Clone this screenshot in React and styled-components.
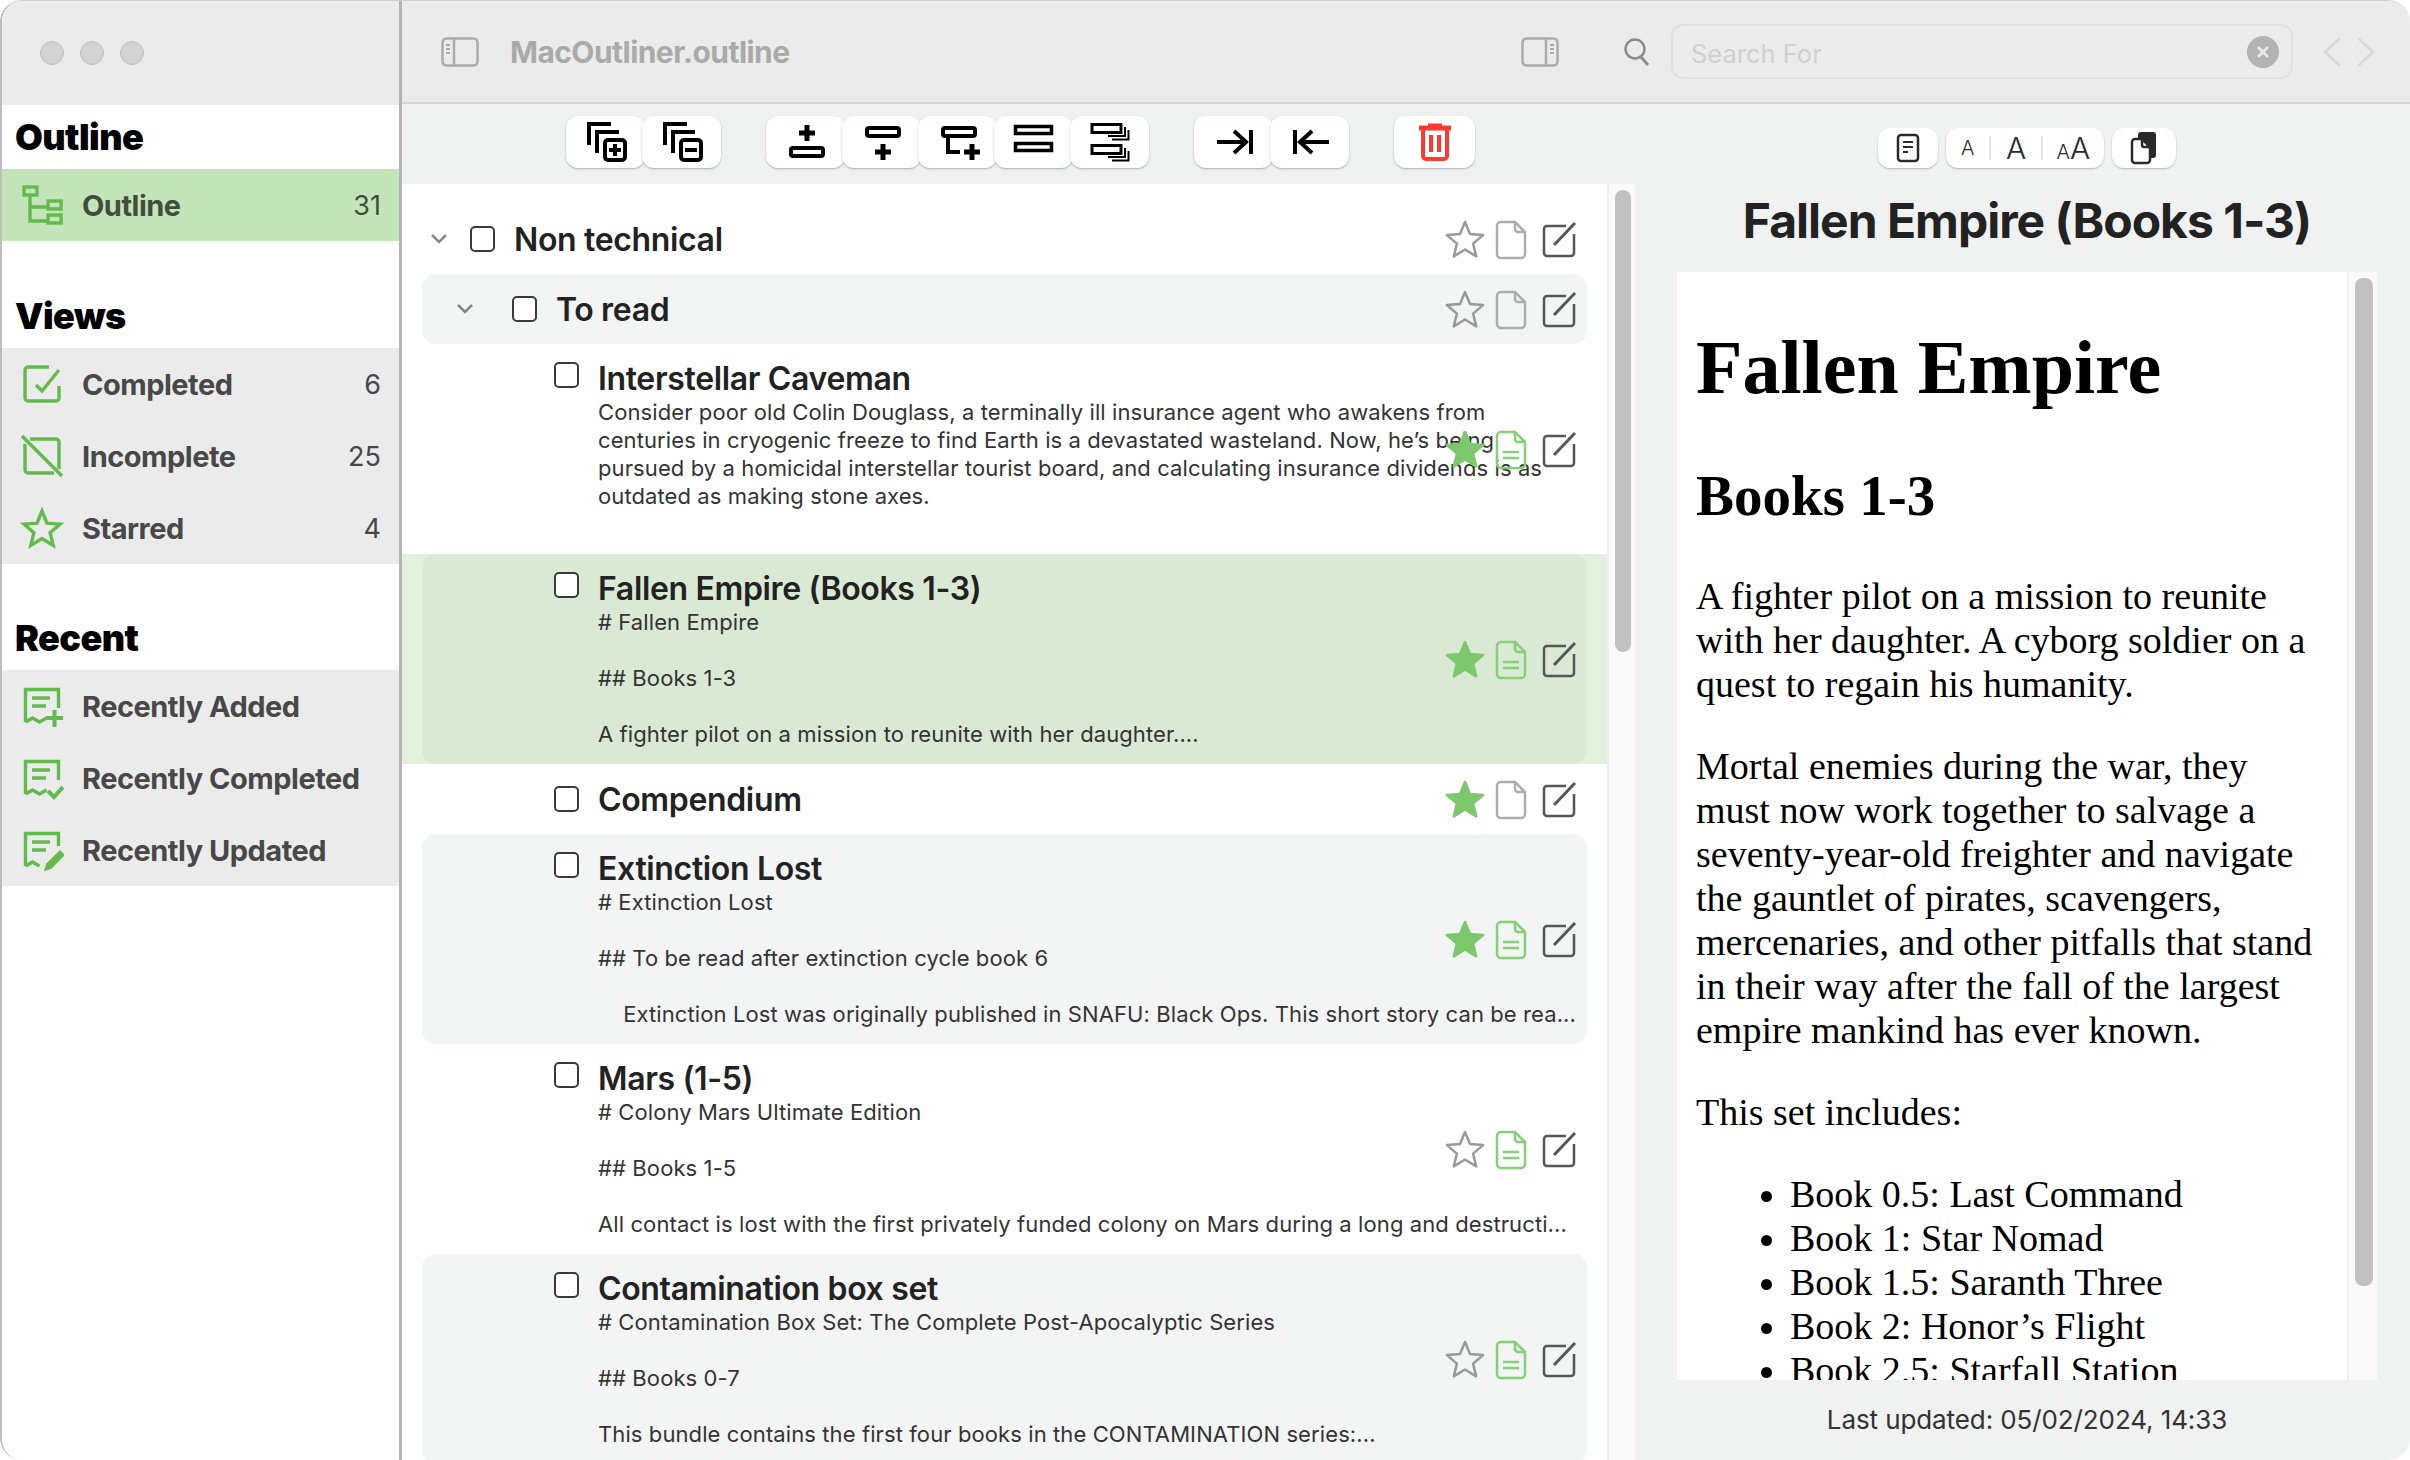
import React from 'react';
import styled, { createGlobalStyle } from 'styled-components';

const GREEN = '#62bb4c';
const UI_FONT = '"Inter", "Liberation Sans", sans-serif';

const GlobalStyle = createGlobalStyle`
    html, body {
        margin: 0;
        padding: 0;
        background: #fff;
        font-family: ${UI_FONT};
    }
`;

const Window = styled.div`
    display: flex;
    width: 2410px;
    height: 1460px;
    overflow: hidden;
    box-sizing: border-box;
    border-radius: 22px;
    border-left: 2px solid #bdbdbd;
    border-top: 1px solid #cfcfcf;
    background: #fff;
`;

/* sidebar */
const Sidebar = styled.aside`
    display: flex;
    flex-direction: column;
    flex: none;
    width: 400px;
    box-sizing: border-box;
    border-right: 3px solid #b4b4b4;
    background: #fff;
`;
const SidebarTop = styled.div`
    display: flex;
    align-items: center;
    gap: 16px;
    flex: none;
    height: 104px;
    padding: 0 0 0 38px;
    box-sizing: border-box;
    background: #ebebeb;
`;
const Light = styled.span`
    width: 24px;
    height: 24px;
    box-sizing: border-box;
    border-radius: 50%;
    background: #d2d2d2;
    border: 1px solid #bfbfbf;
`;
const SectionHead = styled.div`
    height: 64px;
    margin-top: ${({ $gap }) => $gap}px;
    padding-left: 13px;
    line-height: 64px;
    font-size: 36px;
    font-weight: 900;
    letter-spacing: -0.6px;
    color: #000;
`;
const NavRow = styled.div`
    display: flex;
    align-items: center;
    height: 72px;
    padding: 0 18px 0 18px;
    background: ${({ $active }) => ($active ? '#c3e4b9' : '#ebebeb')};
    color: ${({ $active }) => ($active ? '#3f4f3b' : '#484848')};
`;
const NavIcon = styled.svg`
    flex: none;
    width: 44px;
    height: 44px;
    margin-right: 18px;
`;
const NavLabel = styled.span`
    flex: 1;
    font-size: 29px;
    font-weight: 700;
    letter-spacing: -0.5px;
`;
const NavCount = styled.span`
    font-size: 27px;
    font-weight: 400;
`;

/* main area */
const Main = styled.div`
    display: flex;
    flex-direction: column;
    flex: 1;
    min-width: 0;
`;
const TitleBar = styled.header`
    display: flex;
    align-items: center;
    flex: none;
    height: 103px;
    padding: 0 0 0 39px;
    box-sizing: border-box;
    border-bottom: 2px solid #d4d4d4;
    background: #ebebeb;
`;
const DocName = styled.div`
    flex: none;
    width: 1011px;
    margin-left: 31px;
    font-size: 30px;
    font-weight: 700;
    letter-spacing: -0.55px;
    color: #aaa;
`;
const BarIcon = styled.svg`
    flex: none;
    margin-left: ${({ $gap = 0 }) => $gap}px;
`;
const SearchField = styled.div`
    display: flex;
    align-items: center;
    justify-content: space-between;
    width: 622px;
    height: 55px;
    margin: 0 29px 0 20px;
    padding: 0 12px 0 18px;
    box-sizing: border-box;
    border: 2px solid #e0e0e0;
    border-radius: 12px;
    font-size: 25.5px;
    color: #d0d0d0;
`;
const Placeholder = styled.span`
    padding-top: 4px;
`;
const ClearButton = styled.span`
    display: flex;
    align-items: center;
    justify-content: center;
    width: 32px;
    height: 32px;
    border-radius: 50%;
    background: #b3b3b3;
`;
const Body = styled.div`
    display: flex;
    flex: 1;
    min-height: 0;
`;
const OutlinePane = styled.section`
    display: flex;
    flex-direction: column;
    flex: none;
    width: 1233px;
`;
const ToolBar = styled.div`
    display: flex;
    align-items: center;
    flex: none;
    height: 80px;
    padding: 0 0 4px 164px;
    box-sizing: border-box;
    background: #eff1f1;
`;
const ToolGroup = styled.div`
    display: flex;
    margin-right: ${({ $gap }) => $gap}px;
`;
const ToolButton = styled.div`
    display: flex;
    align-items: center;
    justify-content: center;
    width: ${({ $width = 79 }) => $width}px;
    height: 52px;
    margin-right: -3px;
    border-radius: 12px;
    background: #fff;
    box-shadow: 0 1px 2px rgba(0, 0, 0, 0.28);
`;
const ListArea = styled.div`
    display: flex;
    flex: 1;
    min-height: 0;
`;
const OutlineList = styled.div`
    flex: 1;
    min-width: 0;
    padding-top: 20px;
    overflow: hidden;
    background: #fff;
`;
const ScrollTrack = styled.div`
    flex: none;
    width: ${({ $width }) => $width}px;
    box-sizing: border-box;
    padding: ${({ $top }) => $top}px 4px 0 ${({ $left }) => $left}px;
    border-left: 2px solid #eeeeee;
    background: #fafafa;
`;
const ScrollThumb = styled.div`
    height: ${({ $height }) => $height}px;
    border-radius: 8px;
    background: #c1c1c1;
`;

/* outline rows */
const RowBand = styled.div`
    padding: 0 20px;
    background: ${({ $selected }) => ($selected ? '#e2f0dc' : 'transparent')};
`;
const RowBox = styled.div`
    position: relative;
    display: flex;
    align-items: ${({ $note }) => ($note ? 'flex-start' : 'center')};
    height: ${({ $note }) => ($note ? 210 : 70)}px;
    box-sizing: border-box;
    border-radius: 14px;
    background: ${({ $selected, $alt }) => ($selected ? '#d9e9d4' : $alt ? '#f3f5f5' : 'transparent')};
`;
const Disclosure = styled.div`
    display: flex;
    align-items: center;
    flex: none;
    width: ${({ $level }) => 48 + 42 * $level}px;
    padding-left: ${({ $level }) => 7 + 26 * $level}px;
    box-sizing: border-box;
`;
const CheckBox = styled.span`
    flex: none;
    width: 25px;
    height: 26px;
    margin-top: ${({ $note }) => ($note ? '18px' : 0)};
    box-sizing: border-box;
    border: 2.5px solid #3a3a3a;
    border-radius: 5px;
    background: #fff;
`;
const RowText = styled.div`
    flex: 1;
    min-width: 0;
    margin-left: 19px;
    padding-top: ${({ $note }) => ($note ? '15px' : '1px')};
`;
const RowTitle = styled.div`
    height: 40px;
    line-height: 40px;
    font-size: 32px;
    font-weight: 600;
    letter-spacing: -0.35px;
    color: #222;
`;
const RowNote = styled.div`
    white-space: pre;
    line-height: 28px;
    font-size: 22px;
    letter-spacing: 0.1px;
    color: #333;
    margin-top: -1px;
`;
const RowActions = styled.div`
    position: absolute;
    top: calc(50% + 1px);
    right: 9px;
    display: flex;
    align-items: center;
    transform: translateY(-50%);
`;
const ActionIcon = styled.svg`
    flex: none;
    margin-left: ${({ $gap }) => $gap}px;
`;

/* preview pane */
const PreviewPane = styled.section`
    display: flex;
    flex-direction: column;
    flex: 1;
    min-width: 0;
    padding: 24px 33px 0 42px;
    background: #f0f2f2;
`;
const PreviewTools = styled.div`
    display: flex;
    justify-content: center;
    gap: 8px;
    flex: none;
    height: 40px;
`;
const PreviewTool = styled.div`
    display: flex;
    align-items: center;
    justify-content: center;
    width: ${({ $width }) => $width}px;
    height: 40px;
    border-radius: 12px;
    background: #fff;
    box-shadow: 0 1px 2px rgba(0, 0, 0, 0.25);
    color: #2a2a2a;
`;
const SizeCell = styled.div`
    display: flex;
    justify-content: center;
    align-items: baseline;
    width: ${({ $width }) => $width}px;
    height: 24px;
    line-height: 24px;
    border-left: ${({ $divider }) => ($divider ? '2px solid #e3e3e3' : 'none')};
    font-weight: 300;
`;
const SizeLetter = styled.span`
    font-size: ${({ $size }) => $size}px;
`;
const PreviewTitle = styled.h2`
    flex: none;
    height: 104px;
    margin: 0;
    line-height: 106px;
    text-align: center;
    font-size: 48px;
    font-weight: 700;
    letter-spacing: -1px;
    color: #222;
`;
const PreviewBox = styled.div`
    display: flex;
    flex: none;
    height: 1108px;
    overflow: hidden;
    background: #fff;
`;
const Article = styled.article`
    flex: 1;
    min-width: 0;
    padding: 0 17px 0 19px;
    font-family: "Liberation Serif", serif;
    font-size: 38px;
    line-height: 44px;
    color: #000;

    h1 {
        margin: 52px 0 0;
        font-size: 76px;
        line-height: 86px;
    }
    h2 {
        margin: 53px 0 0;
        font-size: 57px;
        line-height: 66px;
    }
    p {
        margin: 38px 0 0;
    }
    h2 + p {
        margin-top: 45px;
    }
    ul {
        margin: 38px 0 0;
        padding: 0 0 0 94px;
    }
`;
const Footer = styled.div`
    flex: none;
    height: 80px;
    line-height: 80px;
    text-align: center;
    font-size: 26px;
    letter-spacing: -0.1px;
    color: #333;
`;

/* icons */
const starPoints = (cx, cy, R, r) =>
    Array.from({ length: 10 }, (_, i) => {
        const a = (Math.PI / 5) * i - Math.PI / 2;
        const d = i % 2 ? r : R;
        return `${(cx + d * Math.cos(a)).toFixed(1)},${(cy + d * Math.sin(a)).toFixed(1)}`;
    }).join(' ');

const RECEIPT = 'M5.5 38V5.5H38.5V24M5.5 38l7-4 7 4 7-4M12 14H30M12 22H26';

const NavGlyph = ({ name }) => {
    const stroke = { fill: 'none', stroke: GREEN, strokeWidth: 3.4 };
    return (
        <NavIcon viewBox="0 0 44 44" {...stroke}>
            {name === 'tree' && (
                <>
                    <rect x="4" y="4" width="13" height="8" />
                    <rect x="28" y="18" width="13" height="8" />
                    <rect x="28" y="32" width="13" height="8" />
                    <path d="M10 12V38H28M10 24H28" />
                </>
            )}
            {name === 'check' && (
                <>
                    <path d="M29 5H8a3 3 0 0 0-3 3v28a3 3 0 0 0 3 3h28a3 3 0 0 0 3-3V24" />
                    <path d="M16 23l6 6L39 8" />
                </>
            )}
            {name === 'none' && (
                <>
                    <path d="M10 5H36a3 3 0 0 1 3 3V35M34 39H8a3 3 0 0 1-3-3V10" />
                    <path d="M2 2L42 42" />
                </>
            )}
            {name === 'star' && <polygon points={starPoints(22, 24, 19, 8.5)} />}
            {name === 'added' && (
                <>
                    <path d={RECEIPT} />
                    <path d="M26 34H43M34.5 26V43" strokeWidth="4" />
                </>
            )}
            {name === 'done' && (
                <>
                    <path d={RECEIPT} />
                    <path d="M28 35l6 6 9-10" strokeWidth="4" />
                </>
            )}
            {name === 'edited' && (
                <>
                    <path d="M5.5 38V5.5H38.5V18M5.5 38l7-4 7 4M12 14H30M12 22H26" />
                    <path d="M25 42l2-6L40 23l4 4L31 40z" fill={GREEN} strokeWidth="1.5" />
                </>
            )}
        </NavIcon>
    );
};

const GLYPH_SHIFT = { docPlus: -3, docMinus: -3, addAbove: -2, addBelow: -2, addChild: -2 };

const ToolGlyph = ({ name }) => {
    const common = { fill: 'none', stroke: '#000', strokeWidth: 4 };
    const doc = <rect x="18" y="18" width="20" height="20" rx="3" />;
    return (
        <svg width="44" height="40" viewBox={`${GLYPH_SHIFT[name] || 0} 0 44 40`} {...common}>
            {name === 'docPlus' && (
                <>
                    <path d="M2 23V2H24M10 31V10H32" />
                    {doc}
                    <path d="M22 28H34M28 22V34" />
                </>
            )}
            {name === 'docMinus' && (
                <>
                    <path d="M2 23V2H24M10 31V10H32" />
                    {doc}
                    <path d="M22 28H34" />
                </>
            )}
            {name === 'addAbove' && (
                <>
                    <path d="M13 11H29M21 3V19" strokeWidth="5" />
                    <rect x="5" y="26" width="32" height="8" rx="2" />
                </>
            )}
            {name === 'addBelow' && (
                <>
                    <rect x="5" y="6" width="32" height="8" rx="2" />
                    <path d="M13 30H29M21 22V38" strokeWidth="5" />
                </>
            )}
            {name === 'addChild' && (
                <>
                    <rect x="5" y="6" width="32" height="8" rx="2" />
                    <path d="M10 14V30H22" />
                    <path d="M26 30H42M34 22V38" strokeWidth="5" />
                </>
            )}
            {name === 'rows' && (
                <g strokeWidth="3.5">
                    <rect x="3.5" y="4.5" width="36" height="7" />
                    <rect x="3.5" y="21.5" width="36" height="7" />
                </g>
            )}
            {name === 'rowsStack' && (
                <g strokeWidth="3">
                    <rect x="4" y="2.5" width="29" height="8" />
                    <path d="M20 14H37V5M24 17.5H40.5V8" strokeWidth="2" />
                    <rect x="4" y="23.5" width="29" height="8" />
                    <path d="M20 35H37V26M24 38.5H40.5V29" strokeWidth="2" />
                </g>
            )}
            {name === 'indent' && (
                <path d="M5 20H35M22 9L34 20L22 31M39 8V32" />
            )}
            {name === 'outdent' && (
                <path d="M41 20H11M24 9L12 20L24 31M7 8V32" />
            )}
        </svg>
    );
};

const TrashIcon = () => (
    <svg width="34" height="38" viewBox="0 0 34 38" fill="none" stroke="#fc3a30" strokeWidth="4">
        <path d="M1 5H33M10 3H24" strokeWidth="5" />
        <path d="M5 6V33a3 3 0 0 0 3 3H26a3 3 0 0 0 3-3V6" />
        <path d="M13 12V29M21 12V29" />
    </svg>
);

const StarIcon = ({ on }) => (
    <svg width="42" height="40" viewBox="0 0 42 40">
        <polygon
            points={starPoints(21, 21, 19, 8.5)}
            fill={on ? '#7dc76c' : 'none'}
            stroke={on ? '#7dc76c' : '#999'}
            strokeWidth="2.5"
            strokeLinejoin="round"
        />
    </svg>
);

const DocIcon = ({ on }) => (
    <ActionIcon $gap={9} width="32" height="40" viewBox="0 0 32 40" fill="none" stroke={on ? '#85d077' : '#adadad'} strokeWidth="2.5">
        <path d="M20 2H6a4 4 0 0 0-4 4V34a4 4 0 0 0 4 4H26a4 4 0 0 0 4-4V12zM20 2V9a3 3 0 0 0 3 3H30" />
        {on && <path d="M8 22H24M8 28H24" />}
    </ActionIcon>
);

const EditIcon = () => (
    <ActionIcon $gap={15} width="36" height="38" viewBox="0 0 36 38" fill="none" stroke="#565656" strokeWidth="2.5">
        <path d="M24 5H5a3 3 0 0 0-3 3V32a3 3 0 0 0 3 3H29a3 3 0 0 0 3-3V13" />
        <path d="M12 24L33 2" strokeWidth="3" />
    </ActionIcon>
);

const Chevron = ({ color = '#888' }) => (
    <svg width="20" height="12" viewBox="0 0 20 12" fill="none" stroke={color} strokeWidth="2.5">
        <path d="M3 2l7 7 7-7" />
    </svg>
);

const PanelIcon = ({ right }) => (
    <BarIcon width="38" height="30" viewBox="0 0 38 30" fill="none" stroke="#ababab" strokeWidth="2.5">
        <rect x="1.5" y="1.5" width="35" height="27" rx="4" />
        <path d={right ? 'M25 2V28' : 'M13 2V28'} />
        <path d={right ? 'M29 8H33M29 12H33M29 16H33' : 'M5 8H9M5 12H9M5 16H9'} strokeWidth="2" />
    </BarIcon>
);

const NAV = {
    views: [
        { icon: 'check', label: 'Completed', count: 6 },
        { icon: 'none', label: 'Incomplete', count: 25 },
        { icon: 'star', label: 'Starred', count: 4 },
    ],
    recent: [
        { icon: 'added', label: 'Recently Added' },
        { icon: 'done', label: 'Recently Completed' },
        { icon: 'edited', label: 'Recently Updated' },
    ],
};

const ROWS = [
    { level: 0, title: 'Non technical', open: true },
    { level: 1, title: 'To read', open: true, alt: true },
    {
        level: 2,
        title: 'Interstellar Caveman',
        docOn: true,
        starred: true,
        note: 'Consider poor old Colin Douglass, a terminally ill insurance agent who awakens from\ncenturies in cryogenic freeze to find Earth is a devastated wasteland. Now, he’s being\npursued by a homicidal interstellar tourist board, and calculating insurance dividends is as\noutdated as making stone axes.',
    },
    {
        level: 2,
        title: 'Fallen Empire (Books 1-3)',
        docOn: true,
        starred: true,
        selected: true,
        note: '# Fallen Empire\n\n## Books 1-3\n\nA fighter pilot on a mission to reunite with her daughter....',
    },
    { level: 2, title: 'Compendium', starred: true },
    {
        level: 2,
        title: 'Extinction Lost',
        docOn: true,
        starred: true,
        alt: true,
        note: '# Extinction Lost\n\n## To be read after extinction cycle book 6\n\n    Extinction Lost was originally published in SNAFU: Black Ops. This short story can be rea...',
    },
    {
        level: 2,
        title: 'Mars (1-5)',
        docOn: true,
        note: '# Colony Mars Ultimate Edition\n\n## Books 1-5\n\nAll contact is lost with the first privately funded colony on Mars during a long and destructi...',
    },
    {
        level: 2,
        title: 'Contamination box set',
        docOn: true,
        alt: true,
        note: '# Contamination Box Set: The Complete Post-Apocalyptic Series\n\n## Books 0-7\n\nThis bundle contains the first four books in the CONTAMINATION series:...',
    },
];

const BOOKS = [
    'Book 0.5: Last Command',
    'Book 1: Star Nomad',
    'Book 1.5: Saranth Three',
    'Book 2: Honor’s Flight',
    'Book 2.5: Starfall Station',
];

const OutlineRow = ({ row }) => {
    const hasNote = Boolean(row.note);
    return (
        <RowBand $selected={row.selected}>
            <RowBox $note={hasNote} $selected={row.selected} $alt={row.alt}>
                <Disclosure $level={row.level}>{row.open && <Chevron />}</Disclosure>
                <CheckBox $note={hasNote} />
                <RowText $note={hasNote}>
                    <RowTitle>{row.title}</RowTitle>
                    {hasNote && <RowNote>{row.note}</RowNote>}
                </RowText>
                <RowActions>
                    <StarIcon on={row.starred} />
                    <DocIcon on={row.docOn} />
                    <EditIcon />
                </RowActions>
            </RowBox>
        </RowBand>
    );
};

const App = () => (
    <Window>
        <GlobalStyle />
        <Sidebar>
            <SidebarTop>
                <Light />
                <Light />
                <Light />
            </SidebarTop>
            <SectionHead $gap={0}>Outline</SectionHead>
            <NavRow $active>
                <NavGlyph name="tree" />
                <NavLabel>Outline</NavLabel>
                <NavCount>31</NavCount>
            </NavRow>
            <SectionHead $gap={43}>Views</SectionHead>
            {NAV.views.map((item) => (
                <NavRow key={item.label}>
                    <NavGlyph name={item.icon} />
                    <NavLabel>{item.label}</NavLabel>
                    <NavCount>{item.count}</NavCount>
                </NavRow>
            ))}
            <SectionHead $gap={42}>Recent</SectionHead>
            {NAV.recent.map((item) => (
                <NavRow key={item.label}>
                    <NavGlyph name={item.icon} />
                    <NavLabel>{item.label}</NavLabel>
                </NavRow>
            ))}
        </Sidebar>
        <Main>
            <TitleBar>
                <PanelIcon />
                <DocName>MacOutliner.outline</DocName>
                <PanelIcon right />
                <BarIcon $gap={64} width="28" height="30" viewBox="0 0 28 30" fill="none" stroke="#8c8c8c" strokeWidth="2.5">
                    <circle cx="12" cy="12" r="9.5" />
                    <path d="M18 20l7 8" strokeWidth="3" />
                </BarIcon>
                <SearchField>
                    <Placeholder>Search For</Placeholder>
                    <ClearButton>
                        <svg width="14" height="14" viewBox="0 0 14 14" stroke="#ebebeb" strokeWidth="2.5">
                            <path d="M2 2L12 12M12 2L2 12" />
                        </svg>
                    </ClearButton>
                </SearchField>
                <BarIcon width="54" height="30" viewBox="0 0 54 30" fill="none" stroke="#d8d8d8" strokeWidth="2.5" strokeLinecap="round">
                    <path d="M17 2L3 15L17 28M37 2L51 15L37 28" />
                </BarIcon>
            </TitleBar>
            <Body>
                <OutlinePane>
                    <ToolBar>
                        <ToolGroup $gap={48}>
                            <ToolButton><ToolGlyph name="docPlus" /></ToolButton>
                            <ToolButton><ToolGlyph name="docMinus" /></ToolButton>
                        </ToolGroup>
                        <ToolGroup $gap={48}>
                            <ToolButton><ToolGlyph name="addAbove" /></ToolButton>
                            <ToolButton><ToolGlyph name="addBelow" /></ToolButton>
                            <ToolButton><ToolGlyph name="addChild" /></ToolButton>
                            <ToolButton><ToolGlyph name="rows" /></ToolButton>
                            <ToolButton><ToolGlyph name="rowsStack" /></ToolButton>
                        </ToolGroup>
                        <ToolGroup $gap={48}>
                            <ToolButton><ToolGlyph name="indent" /></ToolButton>
                            <ToolButton><ToolGlyph name="outdent" /></ToolButton>
                        </ToolGroup>
                        <ToolGroup $gap={0}>
                            <ToolButton $width={81}><TrashIcon /></ToolButton>
                        </ToolGroup>
                    </ToolBar>
                    <ListArea>
                        <OutlineList>
                            {ROWS.map((row) => (
                                <OutlineRow key={row.title} row={row} />
                            ))}
                        </OutlineList>
                        <ScrollTrack $width={28} $top={6} $left={6}>
                            <ScrollThumb $height={462} />
                        </ScrollTrack>
                    </ListArea>
                </OutlinePane>
                <PreviewPane>
                    <PreviewTools>
                        <PreviewTool $width={60}>
                            <svg width="24" height="30" viewBox="0 0 24 30" fill="none" stroke="#2a2a2a" strokeWidth="2.5">
                                <rect x="2" y="2" width="20" height="26" rx="3" />
                                <path d="M7 9H17M7 14H17M7 19H12" strokeWidth="2" />
                            </svg>
                        </PreviewTool>
                        <PreviewTool $width={158}>
                            <SizeCell $width={44}><SizeLetter $size={20}>A</SizeLetter></SizeCell>
                            <SizeCell $width={50} $divider><SizeLetter $size={30}>A</SizeLetter></SizeCell>
                            <SizeCell $width={62} $divider>
                                <SizeLetter $size={20}>A</SizeLetter>
                                <SizeLetter $size={30}>A</SizeLetter>
                            </SizeCell>
                        </PreviewTool>
                        <PreviewTool $width={64}>
                            <svg width="28" height="34" viewBox="0 0 28 34">
                                <rect x="8" y="1" width="18" height="26" rx="3" fill="#2a2a2a" />
                                <path d="M12 8H5a3 3 0 0 0-3 3V29a3 3 0 0 0 3 3H17a3 3 0 0 0 3-3V16zM12 8V14a2 2 0 0 0 2 2H20" fill="#fff" stroke="#2a2a2a" strokeWidth="2.5" />
                            </svg>
                        </PreviewTool>
                    </PreviewTools>
                    <PreviewTitle>Fallen Empire (Books 1-3)</PreviewTitle>
                    <PreviewBox>
                        <Article>
                            <h1>Fallen Empire</h1>
                            <h2>Books 1-3</h2>
                            <p>A fighter pilot on a mission to reunite with her daughter. A cyborg soldier on a quest to regain his humanity.</p>
                            <p>Mortal enemies during the war, they must now work together to salvage a seventy-year-old freighter and navigate the gauntlet of pirates, scavengers, mercenaries, and other pitfalls that stand in their way after the fall of the largest empire mankind has ever known.</p>
                            <p>This set includes:</p>
                            <ul>
                                {BOOKS.map((book) => (
                                    <li key={book}>{book}</li>
                                ))}
                            </ul>
                        </Article>
                        <ScrollTrack $width={30} $top={6} $left={6}>
                            <ScrollThumb $height={1008} />
                        </ScrollTrack>
                    </PreviewBox>
                    <Footer>Last updated: 05/02/2024, 14:33</Footer>
                </PreviewPane>
            </Body>
        </Main>
    </Window>
);

export default App;
